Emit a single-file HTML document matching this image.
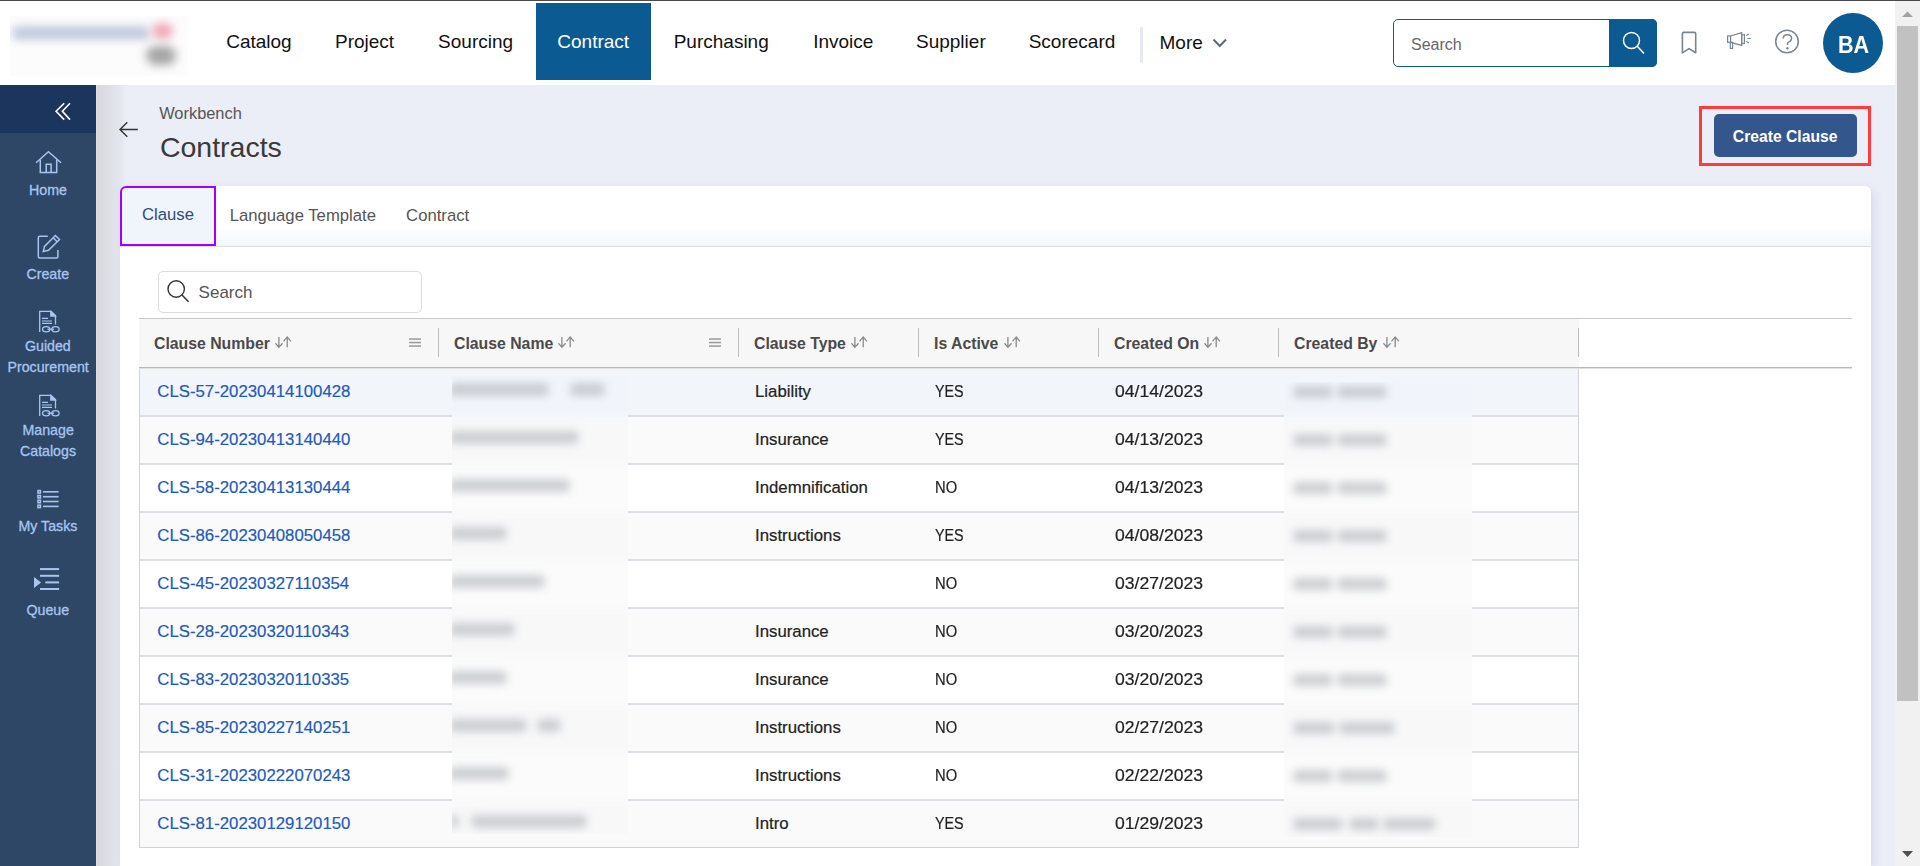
<!DOCTYPE html>
<html><head><meta charset="utf-8"><title>Contracts - Workbench</title>
<style>
html,body{margin:0;padding:0;width:1920px;height:866px;overflow:hidden;background:#ebeef7}
body{position:relative;font-family:"Liberation Sans",sans-serif}
.t{position:absolute;white-space:nowrap;line-height:1;font-family:"Liberation Sans",sans-serif}
.sb{-webkit-text-stroke:0.25px #a8c5f0}
</style></head><body>
<div style="position:absolute;left:0px;top:0px;width:1920px;height:866px;background:#ebeef7"></div>
<div style="position:absolute;left:0px;top:0px;width:1895px;height:85px;background:#fff"></div>
<div style="position:absolute;left:0px;top:0px;width:1920px;height:1px;background:#4a4a4a"></div>
<div style="position:absolute;left:10px;top:16px;width:178px;height:60px;background:#fcfcfd;overflow:hidden"><div style="position:absolute;left:2px;top:10px;width:138px;height:14px;background:#c3cadb;filter:blur(4px);border-radius:6px"></div><div style="position:absolute;left:142px;top:7px;width:21px;height:16px;background:#f0aab8;filter:blur(4px);border-radius:8px"></div><div style="position:absolute;left:136px;top:30px;width:30px;height:19px;background:#a5a5a5;filter:blur(5px);border-radius:10px"></div></div>
<div style="position:absolute;left:536px;top:3px;width:115px;height:77px;background:#0b5a92"></div>
<div class="t" style="left:226.2px;top:32px;font-size:19px;color:#111;">Catalog</div>
<div class="t" style="left:335.0px;top:32px;font-size:19px;color:#111;">Project</div>
<div class="t" style="left:438.1px;top:32px;font-size:19px;color:#111;">Sourcing</div>
<div class="t" style="left:557.3px;top:32px;font-size:19px;color:#fff;">Contract</div>
<div class="t" style="left:673.7px;top:32px;font-size:19px;color:#111;">Purchasing</div>
<div class="t" style="left:813.2px;top:32px;font-size:19px;color:#111;">Invoice</div>
<div class="t" style="left:916.0px;top:32px;font-size:19px;color:#111;">Supplier</div>
<div class="t" style="left:1028.7px;top:32px;font-size:19px;color:#111;">Scorecard</div>
<div style="position:absolute;left:1140px;top:27px;width:3px;height:36px;background:#e6e9f5"></div>
<div class="t" style="left:1159.5px;top:33px;font-size:19px;color:#111;">More</div>
<svg style="position:absolute;left:1211px;top:36px" width="18" height="14"><path d="M2.5 3.5 L8.8 10 L15 3.5" fill="none" stroke="#5f6b76" stroke-width="2"/></svg>
<div style="position:absolute;left:1393px;top:19px;width:264px;height:48px;box-sizing:border-box;border:1px solid #0b5a92;border-radius:5px;background:#fff"></div>
<div style="position:absolute;left:1609px;top:19px;width:48px;height:48px;background:#0b5a92;border-radius:0 5px 5px 0"></div>
<div class="t" style="left:1411.0px;top:37px;font-size:16px;color:#666;">Search</div>
<svg style="position:absolute;left:1615px;top:25px" width="36" height="36"><circle cx="16.5" cy="15.5" r="8" fill="none" stroke="#fff" stroke-width="1.5"/><path d="M22.3 21.3 L29 28.5" stroke="#fff" stroke-width="1.6"/></svg>
<svg style="position:absolute;left:1676px;top:27px" width="26" height="32"><path d="M6.4 25.8 V6.6 Q6.4 5.4 7.6 5.4 H18.5 Q19.7 5.4 19.7 6.6 V25.8 L13 21.6 Z" fill="none" stroke="#7b858e" stroke-width="1.6" stroke-linejoin="round"/></svg>
<svg style="position:absolute;left:1720px;top:25px" width="40" height="33" fill="none" stroke="#7b858e" stroke-width="1.2"><rect x="7.6" y="11" width="3" height="6.3"/><path d="M10.6 11 L21.7 7.6 V20.4 L10.6 17.3"/><rect x="21.7" y="9.7" width="2.7" height="8.8"/><rect x="10.3" y="17.3" width="2.3" height="6.1"/><path d="M26.2 10.6 L29 9 M27.5 13.5 H30.7 M26.2 16.5 L29 18"/></svg>
<svg style="position:absolute;left:1770px;top:24px" width="34" height="34"><circle cx="17" cy="17.5" r="11.3" fill="none" stroke="#7b858e" stroke-width="1.5"/><path d="M13.2 14.6 C13.2 12.2 15 10.8 17.4 10.8 C19.8 10.8 21.6 12.4 21.6 14.6 C21.6 16.6 20 17.4 18.6 18.2 C17.6 18.8 17.4 19.4 17.4 20.6 V21" fill="none" stroke="#7b858e" stroke-width="1.5"/><circle cx="17.4" cy="24.2" r="1.2" fill="#7b858e"/></svg>
<div style="position:absolute;left:1823px;top:13px;width:60px;height:60px;background:#0b5a92;border-radius:50%"></div>
<div class="t" style="left:1838.0px;top:34px;font-size:23px;font-weight:bold;color:#fff;transform:scaleX(0.9394);transform-origin:0px 0;">BA</div>
<div style="position:absolute;left:1895px;top:1px;width:25px;height:865px;background:#f1f1f1"></div>
<div style="position:absolute;left:1897px;top:26px;width:21px;height:675px;background:#c1c1c1"></div>
<svg style="position:absolute;left:1895px;top:1px" width="25" height="865"><path d="M7 16 L12.5 10.5 L18 16 Z" fill="#a3a3a3"/><path d="M7 850 L12.5 856 L18 850 Z" fill="#505050"/></svg>
<div style="position:absolute;left:0px;top:85px;width:96px;height:781px;background:#2e4766"></div>
<div style="position:absolute;left:0px;top:85px;width:96px;height:48px;background:#1b355c"></div>
<div style="position:absolute;left:96px;top:85px;width:30px;height:781px;background:linear-gradient(to right,#e4e4e8 0,#d9d8dd 1.5px,#dedfe6 45%,#e4e6ef 80%,#ebeef7 100%)"></div>
<svg style="position:absolute;left:50px;top:98px" width="26" height="28"><path d="M14.2 5.3 L6.1 13.2 L14.2 21.6 M20 5.3 L12.4 13.2 L20 21.6" fill="none" stroke="#fff" stroke-width="1.6"/></svg>
<svg style="position:absolute;left:30px;top:145px" width="36" height="34" fill="none" stroke="#a8c5f0" stroke-width="1.5"><path d="M6.1 17.8 L18.4 6.8 L31 17.8"/><path d="M10.3 14.5 V27.6 H26.7 V14.5"/><path d="M16.2 27.6 V19.3 H21.1 V27.6"/></svg>
<div class="t" style="left:29.0px;top:183px;font-size:14.2px;color:#a8c5f0;-webkit-text-stroke:0.3px #a8c5f0;">Home</div>
<svg style="position:absolute;left:30px;top:228px" width="40" height="36" fill="none" stroke="#a8c5f0" stroke-width="1.5"><path d="M17.8 8.3 H9.8 Q8.3 8.3 8.3 9.8 V28.4 Q8.3 29.9 9.8 29.9 H26.4 Q27.9 29.9 27.9 28.4 V22"/><path d="M13.3 23.4 L14.5 18.4 L25.4 7.5 L29.5 11.5 L18.5 22.3 Z M23.3 9.8 L27.2 13.7"/></svg>
<div class="t" style="left:26.5px;top:267px;font-size:14.2px;color:#a8c5f0;-webkit-text-stroke:0.3px #a8c5f0;">Create</div>
<svg style="position:absolute;left:30px;top:305px" width="40" height="36" fill="none" stroke="#a8c5f0" stroke-width="1.3"><path d="M9.7 26.9 V6.3 H21.2 L25.5 10.5 V19.6"/><path d="M20.8 6.5 V11 H25.3 Z" fill="#a8c5f0"/><path d="M12 13.3 H18 M12 16 H22 M12 18.4 H22" stroke-width="1.2"/><ellipse cx="16.2" cy="24.2" rx="3.6" ry="2.6"/><ellipse cx="25.5" cy="24.2" rx="3.6" ry="2.6"/><path d="M17.5 24.2 H24"/></svg>
<div class="t" style="left:25.0px;top:338.7px;font-size:14.2px;color:#a8c5f0;-webkit-text-stroke:0.3px #a8c5f0;">Guided</div>
<div class="t" style="left:7.5px;top:359.7px;font-size:14.2px;color:#a8c5f0;-webkit-text-stroke:0.3px #a8c5f0;">Procurement</div>
<svg style="position:absolute;left:30px;top:389px" width="40" height="36" fill="none" stroke="#a8c5f0" stroke-width="1.3"><path d="M9.7 26.9 V6.3 H21.2 L25.5 10.5 V19.6"/><path d="M20.8 6.5 V11 H25.3 Z" fill="#a8c5f0"/><path d="M12 13.3 H18 M12 16 H22 M12 18.4 H22" stroke-width="1.2"/><ellipse cx="16.2" cy="24.2" rx="3.6" ry="2.6"/><ellipse cx="25.5" cy="24.2" rx="3.6" ry="2.6"/><path d="M17.5 24.2 H24"/></svg>
<div class="t" style="left:22.5px;top:423px;font-size:14.2px;color:#a8c5f0;-webkit-text-stroke:0.3px #a8c5f0;">Manage</div>
<div class="t" style="left:20.0px;top:443.7px;font-size:14.2px;color:#a8c5f0;-webkit-text-stroke:0.3px #a8c5f0;">Catalogs</div>
<svg style="position:absolute;left:28px;top:483px" width="40" height="30"><rect x="9.2" y="6.8" width="4" height="4" fill="#a8c5f0"/><rect x="10.7" y="8.3" width="1" height="1" fill="#2e4766"/><path d="M15 8.8 H30.6" stroke="#a8c5f0" stroke-width="1.6"/><rect x="9.2" y="11.7" width="4" height="4" fill="#a8c5f0"/><rect x="10.7" y="13.2" width="1" height="1" fill="#2e4766"/><path d="M15 13.7 H30.6" stroke="#a8c5f0" stroke-width="1.6"/><rect x="9.2" y="16.5" width="4" height="4" fill="#a8c5f0"/><rect x="10.7" y="18.0" width="1" height="1" fill="#2e4766"/><path d="M15 18.5 H30.6" stroke="#a8c5f0" stroke-width="1.6"/><rect x="9.2" y="21.4" width="4" height="4" fill="#a8c5f0"/><rect x="10.7" y="22.9" width="1" height="1" fill="#2e4766"/><path d="M15 23.4 H30.6" stroke="#a8c5f0" stroke-width="1.6"/></svg>
<div class="t" style="left:18.5px;top:518.5px;font-size:14.2px;color:#a8c5f0;-webkit-text-stroke:0.3px #a8c5f0;">My Tasks</div>
<svg style="position:absolute;left:28px;top:560px" width="40" height="35" fill="#a8c5f0"><rect x="12" y="8.1" width="19.1" height="2"/><rect x="12" y="14.8" width="19.1" height="2"/><rect x="17.4" y="21.4" width="13.7" height="2"/><rect x="12" y="28" width="19.1" height="2"/><path d="M6 17 V27.9 L13.1 22.4 Z"/></svg>
<div class="t" style="left:26.5px;top:602.8px;font-size:14.2px;color:#a8c5f0;-webkit-text-stroke:0.3px #a8c5f0;">Queue</div>
<svg style="position:absolute;left:115px;top:117px" width="28" height="25"><path d="M22.8 12.5 H5.5 M12.3 5.3 L5 12.5 L12.3 19.7" fill="none" stroke="#333" stroke-width="1.4"/></svg>
<div class="t" style="left:159.2px;top:105.2px;font-size:16.4px;color:#555;">Workbench</div>
<div class="t" style="left:159.9px;top:133px;font-size:28.5px;color:#3a3a3a;">Contracts</div>
<div style="position:absolute;left:1699px;top:106px;width:172px;height:60px;box-sizing:border-box;border:3px solid #ff3b3b"></div>
<div style="position:absolute;left:1714px;top:114px;width:143px;height:43px;background:#33578c;border-radius:5px"></div>
<div class="t" style="left:1732.8px;top:129px;font-size:15.7px;font-weight:bold;color:#fff;">Create Clause</div>
<div style="position:absolute;left:120px;top:186px;width:1751px;height:680px;background:#fff;border-radius:6px 6px 0 0;box-shadow:3px 3px 9px rgba(120,130,170,0.16)"></div>
<div style="position:absolute;left:120px;top:228px;width:1751px;height:18px;background:linear-gradient(to bottom,rgba(240,243,250,0),#f3f5fa)"></div>
<div style="position:absolute;left:120px;top:246px;width:1751px;height:1px;background:#dcdcdc"></div>
<div style="position:absolute;left:120px;top:186px;width:96px;height:60px;box-sizing:border-box;border:2px solid #a100ff;border-radius:6px 0 0 0;background:#f0f4fb"></div>
<div class="t" style="left:142.0px;top:207px;font-size:16.7px;color:#2e4c7a;">Clause</div>
<div class="t" style="left:229.7px;top:207.9px;font-size:16.7px;color:#555;">Language Template</div>
<div class="t" style="left:406.1px;top:207.9px;font-size:16.7px;color:#555;">Contract</div>
<div style="position:absolute;left:158px;top:271px;width:264px;height:42px;box-sizing:border-box;border:1px solid #dcdcdc;border-radius:5px;background:#fff"></div>
<svg style="position:absolute;left:160px;top:275px" width="34" height="34"><circle cx="16.2" cy="14" r="8.2" fill="none" stroke="#333" stroke-width="1.4"/><path d="M22 20 L28.5 26.8" stroke="#333" stroke-width="1.5"/></svg>
<div class="t" style="left:198.6px;top:284.3px;font-size:17px;color:#555;">Search</div>
<div style="position:absolute;left:139px;top:318px;width:1713px;height:1px;background:#c8c8c8"></div>
<div style="position:absolute;left:139px;top:319px;width:1440px;height:48px;background:#f7f7f7"></div>
<div style="position:absolute;left:139px;top:367px;width:1713px;height:1px;background:#b9b9b9"></div>
<div style="position:absolute;left:139px;top:368px;width:1713px;height:1px;background:#e2e2e2"></div>
<div class="t" style="left:154.0px;top:336px;font-size:15.8px;font-weight:bold;color:#4a4a4a;">Clause Number</div>
<svg style="position:absolute;left:275.0px;top:334px" width="18" height="16" fill="none" stroke="#8a8a8a" stroke-width="1.3"><path d="M3.9 2.9 V13.3 M0.4 9.3 L3.9 13.3 L7.6 9.3"/><path d="M12.2 13.3 V2.9 M8.5 7.3 L12.2 2.9 L15.9 7.3"/></svg>
<svg style="position:absolute;left:409px;top:335px" width="14" height="14" fill="#999"><rect x="0" y="3.3" width="12" height="1.5"/><rect x="0" y="6.8" width="12" height="1.5"/><rect x="0" y="10.3" width="12" height="1.5"/></svg>
<div style="position:absolute;left:438px;top:328px;width:1px;height:29px;background:#bcbcbc"></div>
<div class="t" style="left:454.0px;top:336px;font-size:15.8px;font-weight:bold;color:#4a4a4a;">Clause Name</div>
<svg style="position:absolute;left:558.0px;top:334px" width="18" height="16" fill="none" stroke="#8a8a8a" stroke-width="1.3"><path d="M3.9 2.9 V13.3 M0.4 9.3 L3.9 13.3 L7.6 9.3"/><path d="M12.2 13.3 V2.9 M8.5 7.3 L12.2 2.9 L15.9 7.3"/></svg>
<svg style="position:absolute;left:709px;top:335px" width="14" height="14" fill="#999"><rect x="0" y="3.3" width="12" height="1.5"/><rect x="0" y="6.8" width="12" height="1.5"/><rect x="0" y="10.3" width="12" height="1.5"/></svg>
<div style="position:absolute;left:738px;top:328px;width:1px;height:29px;background:#bcbcbc"></div>
<div class="t" style="left:754.0px;top:336px;font-size:15.8px;font-weight:bold;color:#4a4a4a;">Clause Type</div>
<svg style="position:absolute;left:851.0px;top:334px" width="18" height="16" fill="none" stroke="#8a8a8a" stroke-width="1.3"><path d="M3.9 2.9 V13.3 M0.4 9.3 L3.9 13.3 L7.6 9.3"/><path d="M12.2 13.3 V2.9 M8.5 7.3 L12.2 2.9 L15.9 7.3"/></svg>
<div style="position:absolute;left:918px;top:328px;width:1px;height:29px;background:#bcbcbc"></div>
<div class="t" style="left:934.0px;top:336px;font-size:15.8px;font-weight:bold;color:#4a4a4a;">Is Active</div>
<svg style="position:absolute;left:1004.0px;top:334px" width="18" height="16" fill="none" stroke="#8a8a8a" stroke-width="1.3"><path d="M3.9 2.9 V13.3 M0.4 9.3 L3.9 13.3 L7.6 9.3"/><path d="M12.2 13.3 V2.9 M8.5 7.3 L12.2 2.9 L15.9 7.3"/></svg>
<div style="position:absolute;left:1098px;top:328px;width:1px;height:29px;background:#bcbcbc"></div>
<div class="t" style="left:1114.0px;top:336px;font-size:15.8px;font-weight:bold;color:#4a4a4a;">Created On</div>
<svg style="position:absolute;left:1204.0px;top:334px" width="18" height="16" fill="none" stroke="#8a8a8a" stroke-width="1.3"><path d="M3.9 2.9 V13.3 M0.4 9.3 L3.9 13.3 L7.6 9.3"/><path d="M12.2 13.3 V2.9 M8.5 7.3 L12.2 2.9 L15.9 7.3"/></svg>
<div style="position:absolute;left:1278px;top:328px;width:1px;height:29px;background:#bcbcbc"></div>
<div class="t" style="left:1294.0px;top:336px;font-size:15.8px;font-weight:bold;color:#4a4a4a;">Created By</div>
<svg style="position:absolute;left:1383.0px;top:334px" width="18" height="16" fill="none" stroke="#8a8a8a" stroke-width="1.3"><path d="M3.9 2.9 V13.3 M0.4 9.3 L3.9 13.3 L7.6 9.3"/><path d="M12.2 13.3 V2.9 M8.5 7.3 L12.2 2.9 L15.9 7.3"/></svg>
<div style="position:absolute;left:1578px;top:328px;width:1px;height:29px;background:#bcbcbc"></div>
<div style="position:absolute;left:140px;top:369px;width:1438px;height:46px;background:#f2f5fa"></div>
<div style="position:absolute;left:140px;top:415px;width:1438px;height:2px;background:#dde0e4"></div>
<div class="t" style="left:157.3px;top:384px;font-size:16.8px;color:#1d5bbd;-webkit-text-stroke:0.2px #1d5bbd;">CLS-57-20230414100428</div>
<div class="t" style="left:755.0px;top:384px;font-size:16.8px;color:#222;-webkit-text-stroke:0.2px #222;">Liability</div>
<div class="t" style="left:934.7px;top:384px;font-size:16.8px;color:#222;-webkit-text-stroke:0.2px #222;transform:scaleX(0.8529);transform-origin:0px 0;">YES</div>
<div class="t" style="left:1115.0px;top:384px;font-size:16.8px;color:#222;-webkit-text-stroke:0.2px #222;transform:scaleX(1.0476);transform-origin:0px 0;">04/14/2023</div>
<div style="position:absolute;left:140px;top:417px;width:1438px;height:46px;background:#fafafa"></div>
<div style="position:absolute;left:140px;top:463px;width:1438px;height:2px;background:#dde0e4"></div>
<div class="t" style="left:157.3px;top:432px;font-size:16.8px;color:#1d5bbd;-webkit-text-stroke:0.2px #1d5bbd;">CLS-94-20230413140440</div>
<div class="t" style="left:755.0px;top:432px;font-size:16.8px;color:#222;-webkit-text-stroke:0.2px #222;">Insurance</div>
<div class="t" style="left:934.7px;top:432px;font-size:16.8px;color:#222;-webkit-text-stroke:0.2px #222;transform:scaleX(0.8529);transform-origin:0px 0;">YES</div>
<div class="t" style="left:1115.0px;top:432px;font-size:16.8px;color:#222;-webkit-text-stroke:0.2px #222;transform:scaleX(1.0476);transform-origin:0px 0;">04/13/2023</div>
<div style="position:absolute;left:140px;top:465px;width:1438px;height:46px;background:#fff"></div>
<div style="position:absolute;left:140px;top:511px;width:1438px;height:2px;background:#dde0e4"></div>
<div class="t" style="left:157.3px;top:480px;font-size:16.8px;color:#1d5bbd;-webkit-text-stroke:0.2px #1d5bbd;">CLS-58-20230413130444</div>
<div class="t" style="left:755.0px;top:480px;font-size:16.8px;color:#222;-webkit-text-stroke:0.2px #222;">Indemnification</div>
<div class="t" style="left:934.7px;top:480px;font-size:16.8px;color:#222;-webkit-text-stroke:0.2px #222;transform:scaleX(0.8800);transform-origin:0px 0;">NO</div>
<div class="t" style="left:1115.0px;top:480px;font-size:16.8px;color:#222;-webkit-text-stroke:0.2px #222;transform:scaleX(1.0476);transform-origin:0px 0;">04/13/2023</div>
<div style="position:absolute;left:140px;top:513px;width:1438px;height:46px;background:#fafafa"></div>
<div style="position:absolute;left:140px;top:559px;width:1438px;height:2px;background:#dde0e4"></div>
<div class="t" style="left:157.3px;top:528px;font-size:16.8px;color:#1d5bbd;-webkit-text-stroke:0.2px #1d5bbd;">CLS-86-20230408050458</div>
<div class="t" style="left:755.0px;top:528px;font-size:16.8px;color:#222;-webkit-text-stroke:0.2px #222;">Instructions</div>
<div class="t" style="left:934.7px;top:528px;font-size:16.8px;color:#222;-webkit-text-stroke:0.2px #222;transform:scaleX(0.8529);transform-origin:0px 0;">YES</div>
<div class="t" style="left:1115.0px;top:528px;font-size:16.8px;color:#222;-webkit-text-stroke:0.2px #222;transform:scaleX(1.0476);transform-origin:0px 0;">04/08/2023</div>
<div style="position:absolute;left:140px;top:561px;width:1438px;height:46px;background:#fff"></div>
<div style="position:absolute;left:140px;top:607px;width:1438px;height:2px;background:#dde0e4"></div>
<div class="t" style="left:157.3px;top:576px;font-size:16.8px;color:#1d5bbd;-webkit-text-stroke:0.2px #1d5bbd;">CLS-45-20230327110354</div>
<div class="t" style="left:934.7px;top:576px;font-size:16.8px;color:#222;-webkit-text-stroke:0.2px #222;transform:scaleX(0.8800);transform-origin:0px 0;">NO</div>
<div class="t" style="left:1115.0px;top:576px;font-size:16.8px;color:#222;-webkit-text-stroke:0.2px #222;transform:scaleX(1.0476);transform-origin:0px 0;">03/27/2023</div>
<div style="position:absolute;left:140px;top:609px;width:1438px;height:46px;background:#fafafa"></div>
<div style="position:absolute;left:140px;top:655px;width:1438px;height:2px;background:#dde0e4"></div>
<div class="t" style="left:157.3px;top:624px;font-size:16.8px;color:#1d5bbd;-webkit-text-stroke:0.2px #1d5bbd;">CLS-28-20230320110343</div>
<div class="t" style="left:755.0px;top:624px;font-size:16.8px;color:#222;-webkit-text-stroke:0.2px #222;">Insurance</div>
<div class="t" style="left:934.7px;top:624px;font-size:16.8px;color:#222;-webkit-text-stroke:0.2px #222;transform:scaleX(0.8800);transform-origin:0px 0;">NO</div>
<div class="t" style="left:1115.0px;top:624px;font-size:16.8px;color:#222;-webkit-text-stroke:0.2px #222;transform:scaleX(1.0476);transform-origin:0px 0;">03/20/2023</div>
<div style="position:absolute;left:140px;top:657px;width:1438px;height:46px;background:#fff"></div>
<div style="position:absolute;left:140px;top:703px;width:1438px;height:2px;background:#dde0e4"></div>
<div class="t" style="left:157.3px;top:672px;font-size:16.8px;color:#1d5bbd;-webkit-text-stroke:0.2px #1d5bbd;">CLS-83-20230320110335</div>
<div class="t" style="left:755.0px;top:672px;font-size:16.8px;color:#222;-webkit-text-stroke:0.2px #222;">Insurance</div>
<div class="t" style="left:934.7px;top:672px;font-size:16.8px;color:#222;-webkit-text-stroke:0.2px #222;transform:scaleX(0.8800);transform-origin:0px 0;">NO</div>
<div class="t" style="left:1115.0px;top:672px;font-size:16.8px;color:#222;-webkit-text-stroke:0.2px #222;transform:scaleX(1.0476);transform-origin:0px 0;">03/20/2023</div>
<div style="position:absolute;left:140px;top:705px;width:1438px;height:46px;background:#fafafa"></div>
<div style="position:absolute;left:140px;top:751px;width:1438px;height:2px;background:#dde0e4"></div>
<div class="t" style="left:157.3px;top:720px;font-size:16.8px;color:#1d5bbd;-webkit-text-stroke:0.2px #1d5bbd;">CLS-85-20230227140251</div>
<div class="t" style="left:755.0px;top:720px;font-size:16.8px;color:#222;-webkit-text-stroke:0.2px #222;">Instructions</div>
<div class="t" style="left:934.7px;top:720px;font-size:16.8px;color:#222;-webkit-text-stroke:0.2px #222;transform:scaleX(0.8800);transform-origin:0px 0;">NO</div>
<div class="t" style="left:1115.0px;top:720px;font-size:16.8px;color:#222;-webkit-text-stroke:0.2px #222;transform:scaleX(1.0476);transform-origin:0px 0;">02/27/2023</div>
<div style="position:absolute;left:140px;top:753px;width:1438px;height:46px;background:#fff"></div>
<div style="position:absolute;left:140px;top:799px;width:1438px;height:2px;background:#dde0e4"></div>
<div class="t" style="left:157.3px;top:768px;font-size:16.8px;color:#1d5bbd;-webkit-text-stroke:0.2px #1d5bbd;">CLS-31-20230222070243</div>
<div class="t" style="left:755.0px;top:768px;font-size:16.8px;color:#222;-webkit-text-stroke:0.2px #222;">Instructions</div>
<div class="t" style="left:934.7px;top:768px;font-size:16.8px;color:#222;-webkit-text-stroke:0.2px #222;transform:scaleX(0.8800);transform-origin:0px 0;">NO</div>
<div class="t" style="left:1115.0px;top:768px;font-size:16.8px;color:#222;-webkit-text-stroke:0.2px #222;transform:scaleX(1.0476);transform-origin:0px 0;">02/22/2023</div>
<div style="position:absolute;left:140px;top:801px;width:1438px;height:46px;background:#fafafa"></div>
<div class="t" style="left:157.3px;top:816px;font-size:16.8px;color:#1d5bbd;-webkit-text-stroke:0.2px #1d5bbd;">CLS-81-20230129120150</div>
<div class="t" style="left:755.0px;top:816px;font-size:16.8px;color:#222;-webkit-text-stroke:0.2px #222;">Intro</div>
<div class="t" style="left:934.7px;top:816px;font-size:16.8px;color:#222;-webkit-text-stroke:0.2px #222;transform:scaleX(0.8529);transform-origin:0px 0;">YES</div>
<div class="t" style="left:1115.0px;top:816px;font-size:16.8px;color:#222;-webkit-text-stroke:0.2px #222;transform:scaleX(1.0476);transform-origin:0px 0;">01/29/2023</div>
<div style="position:absolute;left:139px;top:369px;width:1px;height:479px;background:#d0d3d8"></div>
<div style="position:absolute;left:1578px;top:369px;width:1px;height:479px;background:#d0d3d8"></div>
<div style="position:absolute;left:139px;top:847px;width:1440px;height:1px;background:#cfd2d6"></div>
<div style="position:absolute;left:452px;top:376px;width:176px;height:458px;overflow:hidden;background:#fafafa">
<div style="position:absolute;left:-10px;top:-10px;width:200px;height:480px;filter:blur(6px)">
<div style="position:absolute;left:0;top:0px;width:200px;height:51px;background:#f1f5fb"></div>
<div style="position:absolute;left:0;top:51px;width:200px;height:48px;background:#f8f8f9"></div>
<div style="position:absolute;left:0;top:99px;width:200px;height:48px;background:#fbfbfb"></div>
<div style="position:absolute;left:0;top:147px;width:200px;height:48px;background:#f8f8f9"></div>
<div style="position:absolute;left:0;top:195px;width:200px;height:48px;background:#fbfbfb"></div>
<div style="position:absolute;left:0;top:243px;width:200px;height:48px;background:#f8f8f9"></div>
<div style="position:absolute;left:0;top:291px;width:200px;height:48px;background:#fbfbfb"></div>
<div style="position:absolute;left:0;top:339px;width:200px;height:48px;background:#f8f8f9"></div>
<div style="position:absolute;left:0;top:387px;width:200px;height:48px;background:#fbfbfb"></div>
<div style="position:absolute;left:0;top:435px;width:200px;height:48px;background:#f8f8f9"></div>
</div>
<div style="position:absolute;left:-3px;top:7px;width:100px;height:13px;background:#bcc0c5;filter:blur(4.5px);border-radius:5px;opacity:.75"></div>
<div style="position:absolute;left:118px;top:7px;width:35px;height:13px;background:#bcc0c5;filter:blur(4.5px);border-radius:5px;opacity:.75"></div>
<div style="position:absolute;left:-3px;top:55px;width:130px;height:13px;background:#bcc0c5;filter:blur(4.5px);border-radius:5px;opacity:.75"></div>
<div style="position:absolute;left:-3px;top:103px;width:121px;height:13px;background:#bcc0c5;filter:blur(4.5px);border-radius:5px;opacity:.75"></div>
<div style="position:absolute;left:-3px;top:151px;width:58px;height:13px;background:#bcc0c5;filter:blur(4.5px);border-radius:5px;opacity:.75"></div>
<div style="position:absolute;left:-3px;top:199px;width:96px;height:13px;background:#bcc0c5;filter:blur(4.5px);border-radius:5px;opacity:.75"></div>
<div style="position:absolute;left:-3px;top:247px;width:66px;height:13px;background:#bcc0c5;filter:blur(4.5px);border-radius:5px;opacity:.75"></div>
<div style="position:absolute;left:-3px;top:295px;width:58px;height:13px;background:#bcc0c5;filter:blur(4.5px);border-radius:5px;opacity:.75"></div>
<div style="position:absolute;left:-3px;top:343px;width:78px;height:13px;background:#bcc0c5;filter:blur(4.5px);border-radius:5px;opacity:.75"></div>
<div style="position:absolute;left:85px;top:343px;width:24px;height:13px;background:#bcc0c5;filter:blur(4.5px);border-radius:5px;opacity:.75"></div>
<div style="position:absolute;left:-3px;top:391px;width:60px;height:13px;background:#bcc0c5;filter:blur(4.5px);border-radius:5px;opacity:.75"></div>
<div style="position:absolute;left:-3px;top:439px;width:10px;height:13px;background:#bcc0c5;filter:blur(4.5px);border-radius:5px;opacity:.75"></div>
<div style="position:absolute;left:19px;top:439px;width:116px;height:13px;background:#bcc0c5;filter:blur(4.5px);border-radius:5px;opacity:.75"></div>
</div>
<div style="position:absolute;left:1284px;top:382px;width:188px;height:455px;overflow:hidden;background:#fafafa">
<div style="position:absolute;left:-10px;top:-10px;width:210px;height:480px;filter:blur(6px)">
<div style="position:absolute;left:0;top:0px;width:210px;height:45px;background:#f1f5fb"></div>
<div style="position:absolute;left:0;top:45px;width:210px;height:48px;background:#f8f8f9"></div>
<div style="position:absolute;left:0;top:93px;width:210px;height:48px;background:#fbfbfb"></div>
<div style="position:absolute;left:0;top:141px;width:210px;height:48px;background:#f8f8f9"></div>
<div style="position:absolute;left:0;top:189px;width:210px;height:48px;background:#fbfbfb"></div>
<div style="position:absolute;left:0;top:237px;width:210px;height:48px;background:#f8f8f9"></div>
<div style="position:absolute;left:0;top:285px;width:210px;height:48px;background:#fbfbfb"></div>
<div style="position:absolute;left:0;top:333px;width:210px;height:48px;background:#f8f8f9"></div>
<div style="position:absolute;left:0;top:381px;width:210px;height:48px;background:#fbfbfb"></div>
<div style="position:absolute;left:0;top:429px;width:210px;height:48px;background:#f8f8f9"></div>
</div>
<div style="position:absolute;left:9px;top:4px;width:40px;height:12px;background:#bcc0c5;filter:blur(4.5px);border-radius:5px;opacity:.75"></div>
<div style="position:absolute;left:53px;top:4px;width:50px;height:12px;background:#bcc0c5;filter:blur(4.5px);border-radius:5px;opacity:.75"></div>
<div style="position:absolute;left:9px;top:52px;width:40px;height:12px;background:#bcc0c5;filter:blur(4.5px);border-radius:5px;opacity:.75"></div>
<div style="position:absolute;left:53px;top:52px;width:50px;height:12px;background:#bcc0c5;filter:blur(4.5px);border-radius:5px;opacity:.75"></div>
<div style="position:absolute;left:9px;top:100px;width:40px;height:12px;background:#bcc0c5;filter:blur(4.5px);border-radius:5px;opacity:.75"></div>
<div style="position:absolute;left:53px;top:100px;width:50px;height:12px;background:#bcc0c5;filter:blur(4.5px);border-radius:5px;opacity:.75"></div>
<div style="position:absolute;left:9px;top:148px;width:40px;height:12px;background:#bcc0c5;filter:blur(4.5px);border-radius:5px;opacity:.75"></div>
<div style="position:absolute;left:53px;top:148px;width:50px;height:12px;background:#bcc0c5;filter:blur(4.5px);border-radius:5px;opacity:.75"></div>
<div style="position:absolute;left:9px;top:196px;width:40px;height:12px;background:#bcc0c5;filter:blur(4.5px);border-radius:5px;opacity:.75"></div>
<div style="position:absolute;left:53px;top:196px;width:50px;height:12px;background:#bcc0c5;filter:blur(4.5px);border-radius:5px;opacity:.75"></div>
<div style="position:absolute;left:9px;top:244px;width:40px;height:12px;background:#bcc0c5;filter:blur(4.5px);border-radius:5px;opacity:.75"></div>
<div style="position:absolute;left:53px;top:244px;width:50px;height:12px;background:#bcc0c5;filter:blur(4.5px);border-radius:5px;opacity:.75"></div>
<div style="position:absolute;left:9px;top:292px;width:40px;height:12px;background:#bcc0c5;filter:blur(4.5px);border-radius:5px;opacity:.75"></div>
<div style="position:absolute;left:53px;top:292px;width:50px;height:12px;background:#bcc0c5;filter:blur(4.5px);border-radius:5px;opacity:.75"></div>
<div style="position:absolute;left:9px;top:340px;width:42px;height:12px;background:#bcc0c5;filter:blur(4.5px);border-radius:5px;opacity:.75"></div>
<div style="position:absolute;left:55px;top:340px;width:56px;height:12px;background:#bcc0c5;filter:blur(4.5px);border-radius:5px;opacity:.75"></div>
<div style="position:absolute;left:9px;top:388px;width:40px;height:12px;background:#bcc0c5;filter:blur(4.5px);border-radius:5px;opacity:.75"></div>
<div style="position:absolute;left:53px;top:388px;width:50px;height:12px;background:#bcc0c5;filter:blur(4.5px);border-radius:5px;opacity:.75"></div>
<div style="position:absolute;left:9px;top:436px;width:50px;height:12px;background:#bcc0c5;filter:blur(4.5px);border-radius:5px;opacity:.75"></div>
<div style="position:absolute;left:65px;top:436px;width:30px;height:12px;background:#bcc0c5;filter:blur(4.5px);border-radius:5px;opacity:.75"></div>
<div style="position:absolute;left:99px;top:436px;width:53px;height:12px;background:#bcc0c5;filter:blur(4.5px);border-radius:5px;opacity:.75"></div>
</div>
</body></html>
